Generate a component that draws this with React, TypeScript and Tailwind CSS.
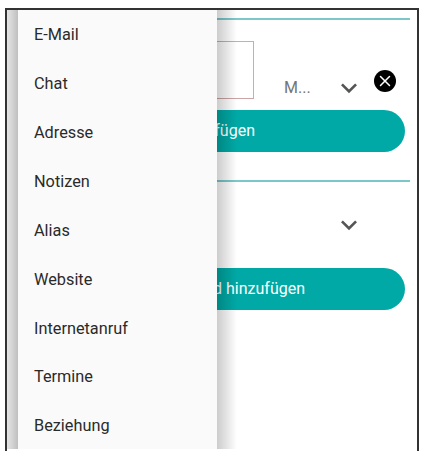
import { X } from 'lucide-react';

const MENU_ITEMS = ['E-Mail', 'Chat', 'Adresse', 'Notizen', 'Alias', 'Website', 'Internetanruf', 'Termine', 'Beziehung'];

function ExpandMore({ className }: { className?: string }) {
  return (
    <svg viewBox="0 0 24 24" fill="currentColor" className={className}>
      <path d="M7.41 8.59 12 13.17l4.59-4.58L18 10l-6 6-6-6z" />
    </svg>
  );
}

export default function App() {
  return (
    <div className="w-[423px] h-[451px] bg-white overflow-hidden font-['Roboto',sans-serif] pt-2 pl-[5px] pr-[4px]">
      <div className="relative h-[443px] border-x-2 border-t-2 border-[#333] overflow-hidden">
        {/* form behind the menu */}
        <div className="pl-[100px] pr-[12px] pt-[8px]">
          <div className="h-[2px] bg-[#7cc7ca] ml-[100px] -mr-[5px]" />
          <div className="flex h-[69px] mt-[21px] ml-[50px]">
            <div className="w-[97px] h-[58px] border border-[#b5b5b5] border-b-[#c9a5a5]" />
            <span className="ml-[30px] mt-[37px] w-[27px] h-5 text-[16px] leading-5 text-[#757575]">M...</span>
            <ExpandMore className="ml-[22px] mt-[31px] w-8 h-8 text-[#555]" />
            <div className="ml-[9px] mt-[29px] w-[22px] h-[22px] rounded-full bg-black flex items-center justify-center">
              <X className="w-[18px] h-[18px] text-white" strokeWidth={2} />
            </div>
          </div>
          <div className="h-[42px] rounded-full bg-[#00a9a5] flex items-center justify-end text-[16px] text-white pr-[150px]">
            Hinzufügen
          </div>
          <div className="h-[2px] bg-[#7cc7ca] mt-[28px] ml-[100px] -mr-[5px]" />
          <div className="flex justify-end h-[86px] pr-[40px] pt-[27px]">
            <ExpandMore className="w-8 h-8 text-[#555]" />
          </div>
          <div className="h-[42px] rounded-full bg-[#00a9a5] flex items-center justify-end text-[16px] text-white pr-[100px]">
            Feld hinzufügen
          </div>
        </div>

        {/* overflow menu with its side shadows */}
        <div className="absolute left-0 top-0 w-[11px] h-[439px] bg-gradient-to-r from-black/10 to-black/25" />
        <div className="absolute left-[210px] top-0 w-[20px] h-[439px] bg-gradient-to-r from-black/20 to-transparent" />
        <div className="absolute left-[11px] top-0 w-[199px] h-[439px] bg-[#fafafa] overflow-hidden">
          {MENU_ITEMS.map((item) => (
            <div key={item} className="h-[48.9px] pl-[16px] pt-[2px] flex items-center text-[16.3px] text-[#2a2a2a]">
              {item}
            </div>
          ))}
        </div>
      </div>
    </div>
  );
}
